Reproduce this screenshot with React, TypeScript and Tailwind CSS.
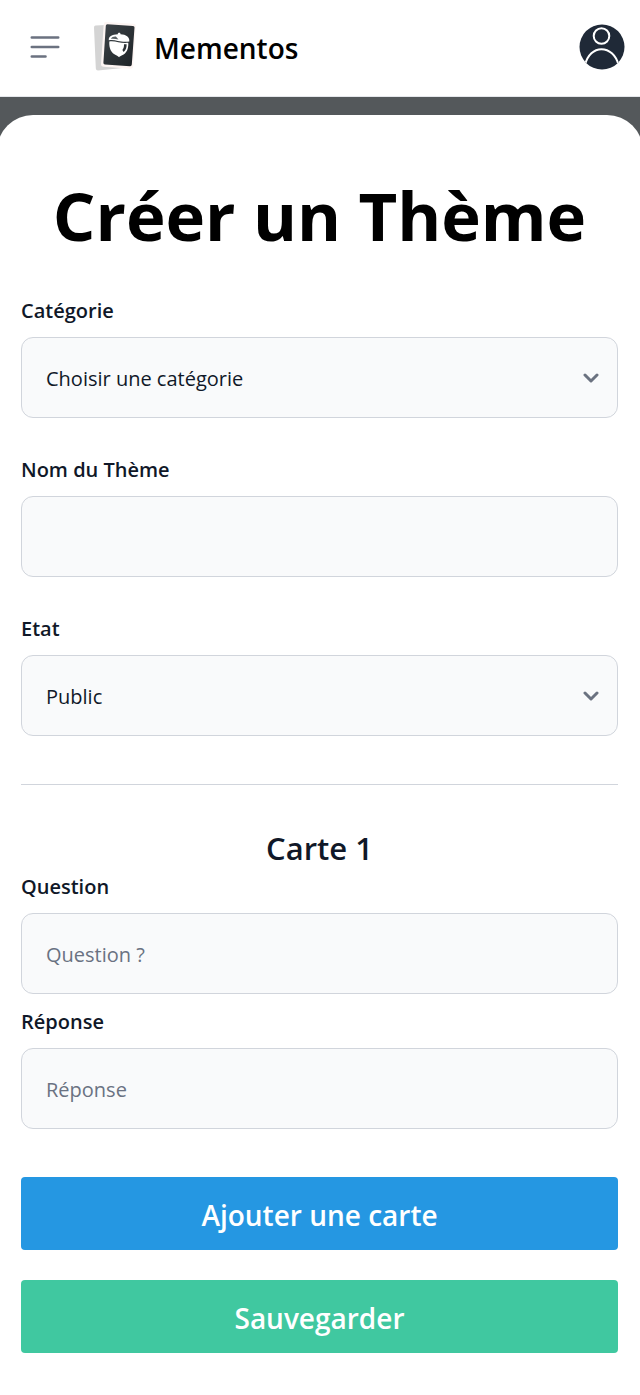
import { useId, type ReactNode } from "react";

const fieldClass =
  "block h-[81px] w-full appearance-none rounded-xl border border-gray-300 bg-[#f9fafb] px-6 pt-[2px] text-[20px] text-gray-900 placeholder:text-gray-500 focus:outline-2 focus:outline-blue-500";

function Label({ htmlFor, children }: { htmlFor: string; children: ReactNode }) {
  return (
    <label htmlFor={htmlFor} className="mb-[11px] block text-[20px] leading-[30px] font-semibold text-gray-900">
      {children}
    </label>
  );
}

function TextField({ label, placeholder }: { label: string; placeholder?: string }) {
  const id = useId();
  return (
    <div>
      <Label htmlFor={id}>{label}</Label>
      <input id={id} type="text" placeholder={placeholder} className={fieldClass} />
    </div>
  );
}

function SelectField({ label, options }: { label: string; options: string[] }) {
  const id = useId();
  return (
    <div>
      <Label htmlFor={id}>{label}</Label>
      <div className="relative">
        <select id={id} className={fieldClass}>
          {options.map((option) => (
            <option key={option}>{option}</option>
          ))}
        </select>
        <svg
          viewBox="0 0 16 10"
          className="pointer-events-none absolute top-1/2 right-[19px] h-[10px] w-4 -translate-y-1/2"
          fill="none"
          stroke="#6b7280"
          strokeWidth="3"
          strokeLinecap="round"
          strokeLinejoin="round"
          aria-hidden="true"
        >
          <path d="M2 2l6 6 6-6" />
        </svg>
      </div>
    </div>
  );
}

function Logo() {
  return (
    <svg viewBox="0 0 44 52" className="h-[52px] w-11" aria-hidden="true">
      <defs>
        <linearGradient id="card-face" x1="0" y1="0" x2="1" y2="1">
          <stop offset="0" stopColor="#3d4449" />
          <stop offset="0.5" stopColor="#2d3337" />
          <stop offset="1" stopColor="#1d2327" />
        </linearGradient>
      </defs>
      <path d="M3.500 3.500L30 2.300l3 43.500-27 2.700q-2 0-2.200-2L2 5.500q0-2 1.500-2z" fill="#d4d4d4" />
      <path d="M14 0L41.500 1.800q2.500.2 2.300 2.500L41.200 44.500q-.3 2.400-2.600 2.300L11.300 44.800q-2.500-.3-2.300-2.600L11.700 2.300Q12 0 14 0z" fill="#fdf5f3" />
      <path d="M15.400 2.200L41 3.900q1.600.1 1.500 1.700L39.800 42.600q-.2 1.700-1.800 1.600L13 42.500q-1.700-.1-1.600-1.700L13.800 3.700q.1-1.600 1.600-1.500z" fill="url(#card-face)" />
      <path d="M16.800 18.300C16.300 14.600 20 12.600 25.800 12.300c-.1-1 .4-1.500 1.400-1.500s1.400.6 1.300 1.500c5.500.3 9.300 2.600 8.800 7.200-3.800.5-8.500.2-11.500-.6-3.200-.8-6-1-9-.6z" fill="#fff" />
      <path d="M17.300 19.400c3.500-.3 6.200.1 9 .8 2.900.7 6.600.9 10 .6.300 6.300-1.800 10.600-6.200 12.500-1.500.6-2.200 1.100-3 1.900-.8-.9-1.500-1.400-2.900-2-5-2.200-7.300-6.800-6.900-13.800z" fill="#fff" />
      <path d="M18.900 16.700c.9-1.700 2.900-2.400 5-2.200l2.600 2.900c-2.600-.7-5.100-.9-7.600-.7z" fill="#596064" />
      <path d="M32 22.300l2.600-.1c.1 3.400-.8 6-3 7.800l-1.200-1.900c1.200-1.500 1.700-3.500 1.600-5.800z" fill="#2d3337" />
    </svg>
  );
}

function Header() {
  return (
    <header className="flex h-[97px] items-center border-b border-gray-200 bg-white pr-[15px] pl-[30px]">
      <button type="button" aria-label="Ouvrir le menu" className="mb-[2px] flex">
        <svg
          viewBox="0 0 30 24"
          className="h-6 w-[30px]"
          fill="none"
          stroke="#6b7280"
          strokeWidth="2.6"
          strokeLinecap="round"
          aria-hidden="true"
        >
          <path d="M1.800 2.500h26.400M1.800 12h26.400M1.800 21.500h13.700" />
        </svg>
      </button>
      <a href="#" className="ml-8 flex items-center gap-[18px] text-[28px] leading-9 font-semibold text-black">
        <Logo />
        <span>Mementos</span>
      </a>
      <button type="button" aria-label="Profil" className="mb-[2px] ml-auto flex rounded-full">
        <svg viewBox="0 0 46 46" className="size-[46px]" aria-hidden="true">
          <defs>
            <clipPath id="avatar-disc">
              <circle cx="23" cy="23" r="22.500" />
            </clipPath>
          </defs>
          <circle cx="23" cy="23" r="22.500" fill="#1f2937" />
          <g clipPath="url(#avatar-disc)" fill="none" stroke="#fff" strokeWidth="2">
            <circle cx="22.500" cy="12" r="7.800" />
            <path d="M6 41C8.500 31 15 25.200 22.500 25.200S37 31 39.500 41" />
          </g>
        </svg>
      </button>
    </header>
  );
}

export default function App() {
  return (
    <div className="flex min-h-screen flex-col overflow-x-hidden bg-[#54585b] font-['Open_Sans','Noto_Sans',sans-serif]">
      <Header />
      <main className="-mx-[3px] mt-[18px] grow rounded-t-[36px] bg-white pt-16 pr-[25px] pb-[41px] pl-6">
        <h1 className="mb-[45px] text-center text-[67px] leading-[72px] font-bold text-black">Créer un Thème</h1>
        <form onSubmit={(event) => event.preventDefault()}>
          <div className="flex flex-col gap-[37px]">
            <SelectField label="Catégorie" options={["Choisir une catégorie"]} />
            <TextField label="Nom du Thème" />
            <SelectField label="Etat" options={["Public", "Privé"]} />
          </div>
          <hr className="mt-12 mb-[39px] border-gray-300" />
          <h2 className="text-center text-[31px] leading-[48px] font-semibold text-gray-900">Carte 1</h2>
          <div className="flex flex-col gap-[13px]">
            <TextField label="Question" placeholder="Question ?" />
            <TextField label="Réponse" placeholder="Réponse" />
          </div>
          <div className="mt-12 flex flex-col gap-[30px] text-[28px] leading-9 font-semibold text-white">
            <button type="button" className="h-[73px] rounded bg-[#2597e2] pt-[2px]">
              Ajouter une carte
            </button>
            <button type="submit" className="h-[73px] rounded bg-[#40c8a0] pt-[2px]">
              Sauvegarder
            </button>
          </div>
        </form>
      </main>
    </div>
  );
}
